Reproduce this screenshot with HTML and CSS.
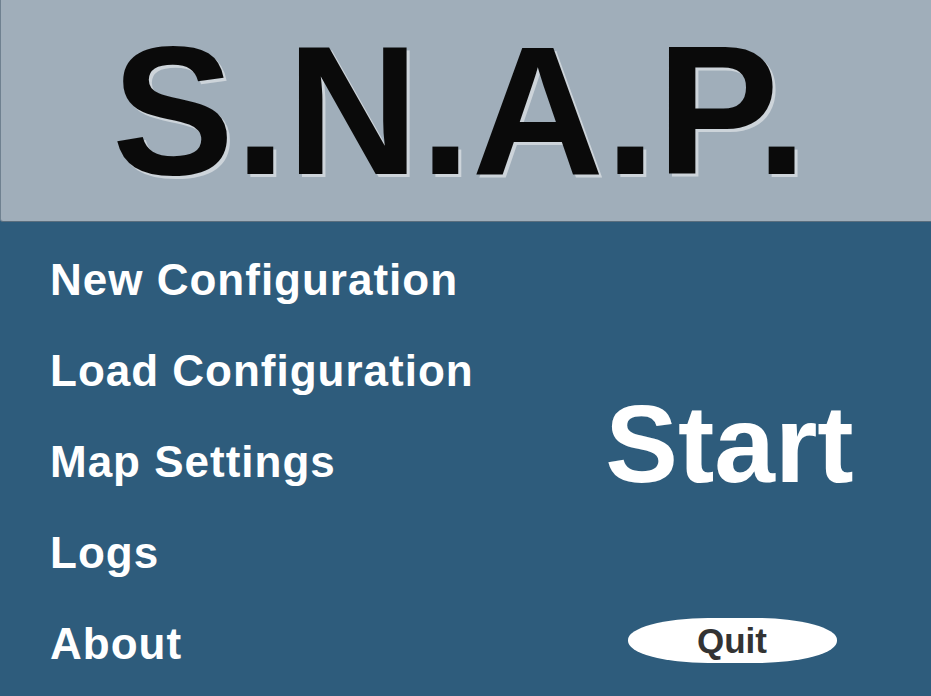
FILE: index.html
```html
<!DOCTYPE html>
<html>
<head>
<meta charset="utf-8">
<link rel="stylesheet" href="styles.css">
</head>
<body>
<div class="screen">
  <header class="header">
    <h1 class="title">S.N.A.P.</h1>
  </header>
  <main class="main">
    <nav class="menu">
      <div class="menu-item">New Configuration</div>
      <div class="menu-item">Load Configuration</div>
      <div class="menu-item">Map Settings</div>
      <div class="menu-item">Logs</div>
      <div class="menu-item">About</div>
    </nav>
    <section class="actions">
      <div class="start">Start</div>
      <button class="quit">Quit</button>
    </section>
  </main>
</div>
</body>
</html>
```
FILE: styles.css
```css
html, body {
  margin: 0;
  padding: 0;
  background: #2e5c7c;
}
.screen {
  width: 931px;
  height: 696px;
  display: flex;
  flex-direction: column;
  font-family: "Liberation Sans", Arial, sans-serif;
  overflow: hidden;
}
.header {
  box-sizing: border-box;
  height: 222px;
  background: #a0aeba;
  border-left: 1px solid #6f8190;
  border-bottom: 1px solid #5a6e7e;
  border-bottom-left-radius: 3px;
  display: flex;
  justify-content: center;
  padding: 19px 12px 0 0;
}
.title {
  margin: 0;
  font-size: 183px;
  line-height: 183px;
  font-weight: bold;
  letter-spacing: 1px;
  color: #0a0a0a;
  text-shadow: 3px 3px 0 #cdd4da;
}
.main {
  flex: 1;
  display: grid;
  grid-template-columns: 528px 1fr;
  background: #2e5c7c;
}
.menu {
  padding: 12px 0 0 50px;
  display: flex;
  flex-direction: column;
}
.menu-item {
  color: #ffffff;
  font-weight: bold;
  font-size: 44px;
  line-height: 91px;
  letter-spacing: 1px;
  white-space: nowrap;
}
.actions {
  display: flex;
  flex-direction: column;
  align-items: center;
  padding-top: 168px;
}
.start {
  color: #ffffff;
  font-weight: bold;
  font-size: 109px;
  line-height: 109px;
}
.quit {
  margin-top: 119px;
  margin-left: 5px;
  width: 209px;
  height: 45px;
  border: none;
  border-radius: 80px / 22px;
  background: #ffffff;
  color: #333333;
  font-family: "Liberation Sans", Arial, sans-serif;
  font-weight: bold;
  font-size: 35px;
  line-height: 45px;
  padding: 0;
}
```
